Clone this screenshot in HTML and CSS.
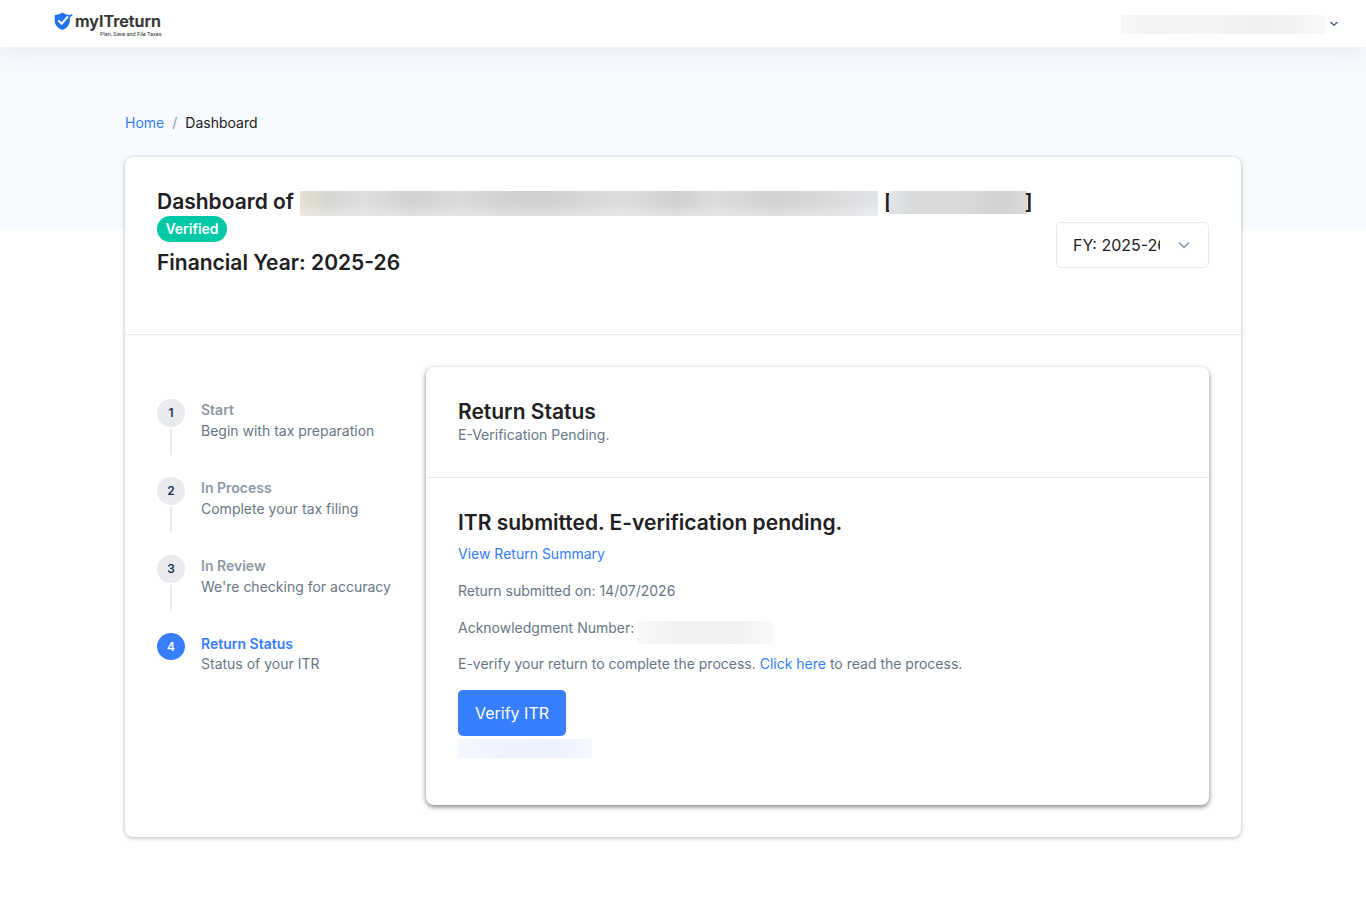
FILE: index.html
```html
<!DOCTYPE html>
<html lang="en">
<head>
<meta charset="utf-8">
<title>Dashboard</title>
<link rel="stylesheet" href="styles.css">
</head>
<body>
<header class="topbar">
  <a class="logo">
    <svg class="logo-mark" width="19" height="20" viewBox="0 0 19 20">
      <path d="M8.300 1.500C6.200 3 3.500 3.700.7 3.900v5.700c0 4.600 3.200 7.800 7.600 9.400 4.400-1.600 7.500-4.800 7.500-9.400V3.900C13 3.700 10.400 3 8.300 1.500z" fill="#2272f0"/>
      <path d="M4.300 9.400l3.300 3.300L14 5.300" fill="none" stroke="#fff" stroke-width="2"/>
      <path d="M14.500 6L18.300 3.600" fill="none" stroke="#2272f0" stroke-width="1.600"/>
    </svg>
    <span class="logo-text"><svg class="wordmark" width="88" height="28"><text class="word" x="0" y="16" textLength="86" lengthAdjust="spacingAndGlyphs">myITreturn</text><text class="tagline" x="25" y="24.500" textLength="61.500" lengthAdjust="spacingAndGlyphs">Plan, Save and File Taxes</text></svg></span>
  </a>
  <div class="account">
    <span class="redacted user"></span>
    <svg width="10" height="8" viewBox="0 0 10 8"><path d="M1.500 2L5 5.300 8.500 2" fill="none" stroke="#506690" stroke-width="1.500"/></svg>
  </div>
</header>
<main class="page">
  <nav class="breadcrumb"><a class="link">Home</a><span class="slash">/</span><span>Dashboard</span></nav>
  <section class="card">
    <div class="card-head">
      <div class="heading">
        <h1 class="title owner">Dashboard of <span class="redacted name"></span><span class="pan">[<span class="redacted pan-value"></span>]</span></h1>
        <span class="badge">Verified</span>
        <h2 class="title year">Financial Year: 2025-26</h2>
      </div>
      <div class="select"><span class="select-value">FY: 2025-26</span>
        <svg width="12" height="8" viewBox="0 0 12 8"><path d="M1 1.400L6 6.300 11 1.400" fill="none" stroke="#7d91ae" stroke-width="1.400"/></svg>
      </div>
    </div>
    <div class="card-body">
      <ol class="steps">
        <li class="step"><div class="rail"><span class="num">1</span></div><div><div class="step-title">Start</div><div class="step-text">Begin with tax preparation</div></div></li>
        <li class="step"><div class="rail"><span class="num">2</span></div><div><div class="step-title">In Process</div><div class="step-text">Complete your tax filing</div></div></li>
        <li class="step"><div class="rail"><span class="num">3</span></div><div><div class="step-title">In Review</div><div class="step-text">We're checking for accuracy</div></div></li>
        <li class="step active"><div class="rail"><span class="num">4</span></div><div><div class="step-title">Return Status</div><div class="step-text">Status of your ITR</div></div></li>
      </ol>
      <section class="status">
        <div class="status-head">
          <h3 class="title">Return Status</h3>
          <div class="substatus">E-Verification Pending.</div>
        </div>
        <div class="status-body">
          <h3 class="title message">ITR submitted. E-verification pending.</h3>
          <p class="line"><a class="link">View Return Summary</a></p>
          <p class="line">Return submitted on: 14/07/2026</p>
          <p class="line ack">Acknowledgment Number: <span class="redacted ack-value"></span></p>
          <p class="line last">E-verify your return to complete the process. <a class="link">Click here</a> to read the process.</p>
          <a class="button">Verify ITR</a>
          <span class="redacted extra"></span>
        </div>
      </section>
    </div>
  </section>
</main>
</body>
</html>
```
FILE: styles.css
```css
* { box-sizing: border-box; }
body {
  margin: 0;
  height: 917px;
  font: 14px/21px Inter, "Liberation Sans", sans-serif;
  color: #677788;
  background: linear-gradient(#f7faff, #f7faff) 0 0 / 100% 229px no-repeat #fff;
}
h1, h2, h3, p, ol { margin: 0; padding: 0; }
.link { color: #377dff; }
.redacted { display: block; flex: none; }

.topbar {
  height: 47px;
  padding: 0 27px 0 54px;
  display: flex;
  justify-content: space-between;
  background: #fff;
  box-shadow: 0 6px 24px rgba(140, 152, 164, .13);
}
.logo { display: flex; padding-top: 11px; }
.logo-text { margin-left: 2px; }
.wordmark { display: block; overflow: visible; }
.word { font: 600 16px Inter, sans-serif; fill: #333; stroke: #333; stroke-width: .2px; }
.tagline { font: 400 6px Roboto, sans-serif; fill: #333; }
.account { display: flex; align-items: center; gap: 4px; }
.user {
  width: 204px;
  height: 19px;
  margin-top: 2px;
  background: linear-gradient(90deg, #f7f9f8, #f2f3f3 12%, #f3f4f5 45%, #eff0f2 68%, #f2f3f4 85%, #f8faf9);
}

.page { width: 1116px; margin: 0 auto; padding-top: 65px; }
.breadcrumb { display: flex; color: #1e2022; }
.slash { color: #8c98a4; margin: 0 8px; }
.card {
  margin-top: 24px;
  height: 680px;
  background: #fff;
  border-radius: 8px;
  box-shadow: 0 1px 4px rgba(0, 0, 0, .3);
}
.card-head {
  height: 178px;
  padding: 0 32px;
  display: flex;
  justify-content: space-between;
  border-bottom: 1px solid #e7eaec;
}
.heading { padding-top: 31px; }
.title { font-size: 21px; line-height: 28px; font-weight: 600; color: #1e2022; }
.owner { display: flex; align-items: center; white-space: nowrap; }
.name {
  width: 578px;
  height: 25px;
  margin: 3px 6px 0;
  background: linear-gradient(transparent 45%, rgba(255, 255, 255, .35)), linear-gradient(90deg, #e6e0d2, #d5d5d5 5%, #dedede 11%, #d0d2d2 19%, #dadada 28%, #d0d1d1 35%, #d0d0d0 43%, #dcdede 56%, #d0d0d0 65%, #dcdcdc 72%, #d1d1d1 82%, #dadada 92%, #e2e5e9);
}
.pan { display: flex; align-items: center; }
.pan-value {
  width: 138px;
  height: 23px;
  margin: 0 -2px 0 -3px;
  background: linear-gradient(90deg, #e0e5ea, #d9dbdb 18%, #dadada 50%, #d1d1d1 82%, #dadada);
}
.badge {
  display: block;
  width: 70px;
  height: 26px;
  border-radius: 13px;
  background: #00c9a7;
  color: #fff;
  font-weight: 600;
  line-height: 26px;
  text-align: center;
}
.year { margin-top: 7px; }
.select {
  width: 153px;
  height: 46px;
  margin-top: 65px;
  padding: 0 18px 0 16px;
  display: flex;
  align-items: center;
  justify-content: space-between;
  border: 1px solid #e7eaec;
  border-radius: 5px;
  color: #1e2022;
  font-size: 16px;
}
.select-value { width: 87px; overflow: hidden; white-space: nowrap; }

.card-body { display: flex; padding: 32px; }
.steps { width: 269px; padding-top: 32px; list-style: none; }
.step { height: 78px; display: flex; gap: 16px; }
.rail { width: 28px; display: flex; flex-direction: column; align-items: center; }
.rail::after { content: ""; width: 2px; height: 26px; margin-top: 2px; background: #e7eaf0; }
.num {
  width: 28px;
  height: 28px;
  border-radius: 50%;
  background: #e8eaee;
  color: #21325b;
  font-size: 12px;
  font-weight: 600;
  line-height: 28px;
  text-align: center;
}
.step-title { font-weight: 600; color: #8c98a4; }
.active .num { background: #377dff; color: #fff; height: 27px; line-height: 27px; }
.active .rail::after { display: none; }
.active .step-title { color: #377dff; }
.active .step-text { margin-top: -1px; }

.status {
  width: 783px;
  height: 438px;
  border-radius: 8px;
  background: #fff;
  box-shadow: 0 2px 5px rgba(0, 0, 0, .5);
}
.status-head { height: 111px; padding: 31px 32px 0; border-bottom: 1px solid #e7eaec; }
.status-head .title { line-height: 28px; }
.substatus { margin-top: -2px; }
.status-body { padding: 31px 32px 0; }
.message { margin-bottom: 6px; }
.line { height: 21px; margin-bottom: 16px; white-space: nowrap; }
.ack { display: flex; margin-bottom: 15px; }
.ack-value {
  width: 135px;
  height: 23px;
  margin: 4px 0 0 4px;
  background: linear-gradient(90deg, #f8f8fa, #f0f1f3 35%, #f0f1f3 70%, #f9f9fa);
}
.last { margin-bottom: 16px; }
.button {
  display: block;
  width: 108px;
  height: 46px;
  border-radius: 5px;
  background: #377dff;
  color: #fff;
  font-size: 16px;
  line-height: 46px;
  text-align: center;
}
.extra {
  width: 134px;
  height: 19px;
  margin-top: 3px;
  background: linear-gradient(90deg, #f4f7ff, #eff3ff 35%, #edf2ff 75%, #f5f8ff);
}
```
